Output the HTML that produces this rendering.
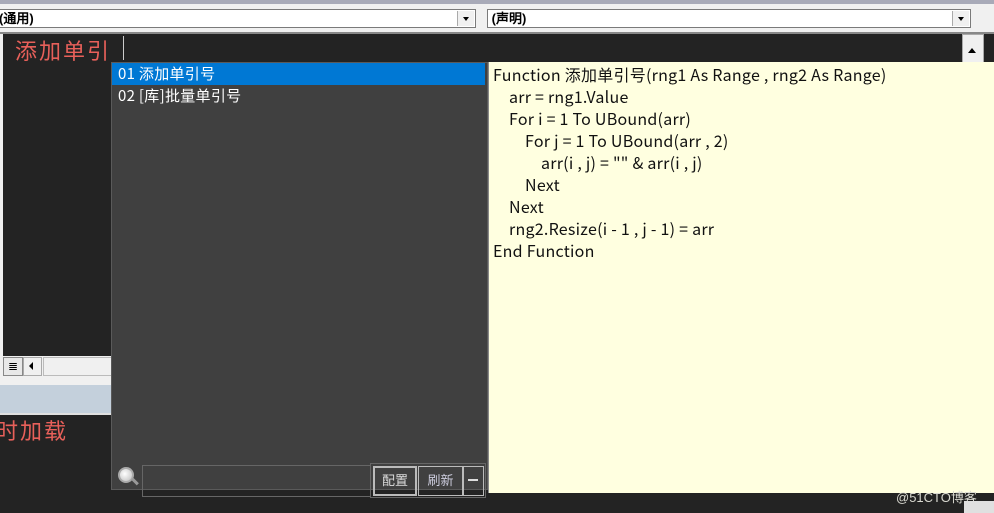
<!DOCTYPE html>
<html><head><meta charset="utf-8"><style>
body{margin:0;width:994px;height:513px;overflow:hidden;background:#232323;position:relative;font-family:"Liberation Sans","Noto Sans CJK SC",sans-serif}
.a{position:absolute}
.combo{background:#fff;border:1px solid #7a7a7a;height:17px;font-size:13px;font-weight:bold;line-height:17px;font-family:"Liberation Sans","WenQuanYi Zen Hei",sans-serif}
.drop{position:absolute;right:1px;top:1px;width:16px;height:15px;background:#f0f0f0;border-left:1px solid #aaa}
.drop:after{content:"";position:absolute;left:5px;top:6px;border:3px solid transparent;border-top:4px solid #000}
.code{font-family:"Noto Sans CJK SC",sans-serif;font-size:16px;letter-spacing:0.25px;color:#111;white-space:nowrap}
.code div{height:22px;line-height:22px}
.li{font-family:"Noto Sans CJK SC",sans-serif;letter-spacing:0.3px}
</style></head><body>
<div class="a" style="left:0;top:0;width:994px;height:4px;background:#a8aab8"></div>
<div class="a" style="left:0;top:4px;width:994px;height:28px;background:#f0f0f0;border-bottom:2px solid #888"></div>
<div class="a combo" style="left:-2px;top:9px;width:476px">(通用)<div class="drop"></div></div>
<div class="a combo" style="left:487px;top:9px;width:482px">&nbsp;(声明)<div class="drop"></div></div>
<div class="a" style="left:0;top:34px;width:3px;height:322px;background:#f0f0f0"></div>
<div class="a" style="left:962px;top:34px;width:20px;height:28px;background:#f0f0f0;border:1px solid #aaa"></div>
<div class="a" style="left:968px;top:48px;border:4px solid transparent;border-bottom:5px solid #000;border-top:0"></div>
<div class="a" style="left:15px;top:34px;font-size:22px;color:#e8605a;letter-spacing:2px">添加单引</div>
<div class="a" style="left:123px;top:36px;width:1px;height:24px;background:#ccc"></div>
<div class="a" style="left:0;top:356px;width:111px;height:20px;background:#f0f0f0"></div>
<div class="a" style="left:3px;top:357px;width:18px;height:17px;background:#e8e8e8;border:1px solid #888;font-size:12px;text-align:center;line-height:17px">≣</div>
<div class="a" style="left:23px;top:357px;width:17px;height:17px;background:#f0f0f0;border:1px solid #aaa"></div>
<div class="a" style="left:29px;top:362px;border:4px solid transparent;border-right:4px solid #000;border-left:0"></div>
<div class="a" style="left:43px;top:357px;width:67px;height:17px;border:1px solid #bbb;background:#f0f0f0"></div>
<div class="a" style="left:0;top:376px;width:111px;height:9px;background:#f0f0f0"></div>
<div class="a" style="left:0;top:385px;width:111px;height:28px;background:#c4d0dc;border-bottom:2px solid #e0e0e0"></div>
<div class="a" style="left:-4px;top:414px;font-size:22px;color:#e8605a;letter-spacing:2px">时加载</div>
<div class="a" style="left:111px;top:62px;width:375px;height:426px;background:#404040;border:1px solid #5a5a5a"></div>
<div class="a li" style="left:112px;top:63px;width:373px;height:22px;background:#0078d4;color:#fff;font-size:15px;line-height:22px;padding-left:6px;box-sizing:border-box">01 添加单引号</div>
<div class="a li" style="left:118px;top:85px;color:#fff;font-size:15px;line-height:22px">02 [库]批量单引号</div>
<div class="a" style="left:118px;top:467px;width:16px;height:16px;border-radius:50%;background:radial-gradient(circle at 40% 40%,#fff,#bbb);border:2px solid #aaa;box-sizing:border-box"></div>
<div class="a" style="left:131px;top:480px;width:8px;height:3px;background:#999;transform:rotate(45deg)"></div>
<div class="a" style="left:142px;top:465px;width:227px;height:30px;border:1px solid #666"></div>
<div class="a" style="left:370px;top:463px;width:114px;height:33px;border:1px solid #666"></div>
<div class="a" style="left:373px;top:466px;width:40px;height:26px;border:2px solid #bbb;color:#ddd;font-size:13px;text-align:center;line-height:26px">配置</div>
<div class="a" style="left:418px;top:466px;width:43px;height:28px;border:1px solid #bbb;color:#ccd;font-size:13px;text-align:center;line-height:28px">刷新</div>
<div class="a" style="left:463px;top:466px;width:19px;height:28px;border:1px solid #bbb"></div>
<div class="a" style="left:468px;top:479px;width:10px;height:2px;background:#ddd"></div>
<div class="a" style="left:488px;top:62px;width:506px;height:431px;background:#ffffe0;border-left:1px solid #888"></div>
<div class="a code" style="left:493px;top:63px">
<div>Function 添加单引号(rng1 As Range , rng2 As Range)</div>
<div style="padding-left:16px">arr = rng1.Value</div>
<div style="padding-left:16px">For i = 1 To UBound(arr)</div>
<div style="padding-left:32px">For j = 1 To UBound(arr , 2)</div>
<div style="padding-left:48px">arr(i , j) = "" &amp; arr(i , j)</div>
<div style="padding-left:32px">Next</div>
<div style="padding-left:16px">Next</div>
<div style="padding-left:16px">rng2.Resize(i - 1 , j - 1) = arr</div>
<div>End Function</div>
</div>
<div class="a" style="left:896px;top:487px;font-size:13px;color:#d8d8d0">@51CTO博客</div>
<div class="a" style="left:964px;top:501px;width:30px;height:12px;background:#e0e0e0"></div>
</body></html>
